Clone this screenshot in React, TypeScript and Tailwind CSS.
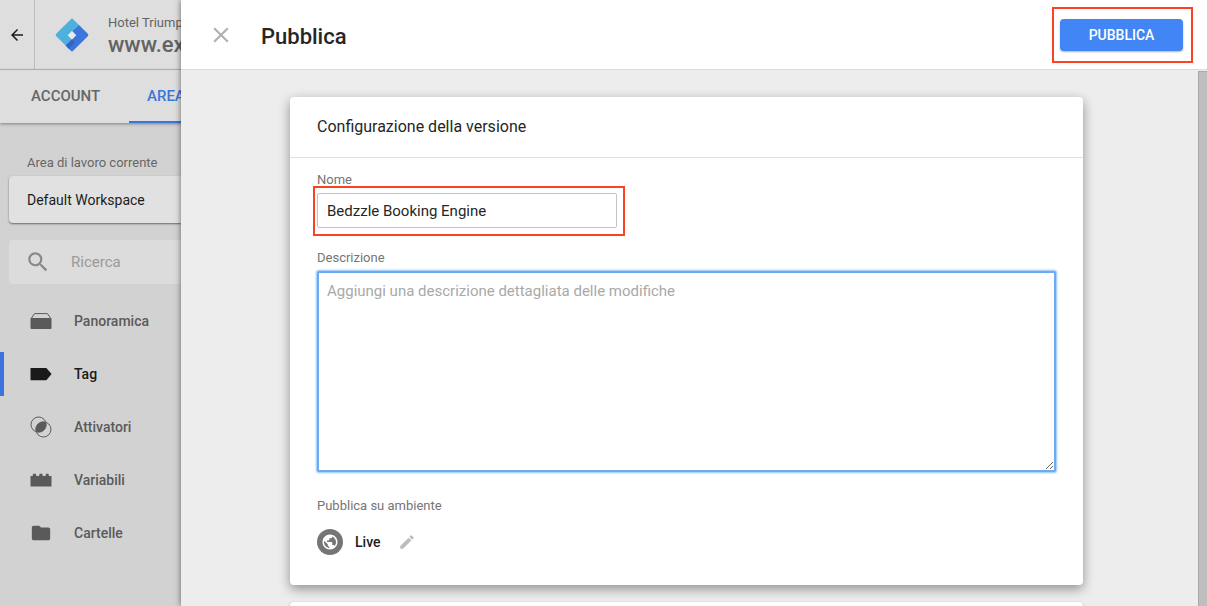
import { useState } from 'react';
import type { ReactNode } from 'react';
import { MdArrowBack, MdClose, MdEdit, MdFolder, MdPublic, MdSearch } from 'react-icons/md';

function Logo() {
  return (
    <svg className="h-[34px] w-[34px] shrink-0" viewBox="0 0 34 34" aria-hidden="true">
      <path d="M15.8 1.2 L1.2 15.8 a1.7 1.7 0 0 0 0 2.4 L10.6 27.6 L17 21.4 L13 17.2 L17 13.2 L24 7 L18.2 1.2 a1.7 1.7 0 0 0 -2.4 0Z" fill="#50b0dc" />
      <path d="M24 7 L32.8 15.8 a1.7 1.7 0 0 1 0 2.4 L18.2 32.8 a1.7 1.7 0 0 1 -2.4 0 L10.6 27.6 L17 21.2 L21 17.2 L17 13.2Z" fill="#3d76db" />
      <path d="M17 21.2 L20 24.2 L14 31 L10.6 27.6Z" fill="#3464c4" />
      <path d="M17 13 L21.2 17.2 L17 21.4 L12.8 17.2Z" fill="#e8eaec" />
    </svg>
  );
}

function OverviewIcon() {
  return (
    <svg className="h-[22px] w-[22px]" viewBox="0 0 22 22" aria-hidden="true">
      <path d="M1.4 8.2 L4.6 3.6 H17.4 L20.6 8.2" fill="none" stroke="currentColor" strokeWidth="1" />
      <path d="M1.5 8 H20.5 a1 1 0 0 1 1 1 V18 a1 1 0 0 1 -1 1 H1.5 a1 1 0 0 1 -1 -1 V9 a1 1 0 0 1 1 -1Z" fill="currentColor" />
    </svg>
  );
}

function TagIcon() {
  return (
    <svg className="h-[22px] w-[22px]" viewBox="0 0 22 22" aria-hidden="true">
      <path d="M0.5 5 H16 a1 1 0 0 1 0.8 0.4 L21.6 11 L16.8 16.8 a1 1 0 0 1 -0.8 0.4 H0.5Z" fill="currentColor" />
    </svg>
  );
}

function TriggerIcon() {
  return (
    <svg className="h-[22px] w-[22px]" viewBox="0 0 22 22" aria-hidden="true">
      <circle cx="8.6" cy="8.6" r="7.6" fill="none" stroke="currentColor" strokeWidth="1" />
      <circle cx="13.4" cy="13.4" r="7.6" fill="none" stroke="currentColor" strokeWidth="1" />
      <path d="M15.8 6.2 A7.6 7.6 0 0 0 6.2 15.8 A7.6 7.6 0 0 0 15.8 6.2Z" fill="currentColor" />
    </svg>
  );
}

function VariableIcon() {
  return (
    <svg className="h-[22px] w-[22px]" viewBox="0 0 22 22" aria-hidden="true">
      <path d="M0.5 7 H2.6 L3.2 4.8 H5.8 L6.4 7 H9 L9.6 4.8 H12.2 L12.8 7 H15.4 L16 4.8 H18.4 L19 7 H21.5 V17.4 H0.5Z" fill="currentColor" />
    </svg>
  );
}

const items: { label: string; icon: ReactNode }[] = [
  { label: 'Panoramica', icon: <OverviewIcon /> },
  { label: 'Tag', icon: <TagIcon /> },
  { label: 'Attivatori', icon: <TriggerIcon /> },
  { label: 'Variabili', icon: <VariableIcon /> },
  { label: 'Cartelle', icon: <MdFolder className="h-[22px] w-[22px]" /> },
];

function Sidebar() {
  const [active, setActive] = useState('Tag');

  return (
    <aside className="flex w-[181px] shrink-0 flex-col overflow-hidden whitespace-nowrap bg-[#d2d2d2]">
      <div className="flex h-[70px] shrink-0 items-stretch border-b border-[#b9b9b9] bg-[#dedede]">
        <button aria-label="Indietro" className="flex w-[35px] shrink-0 items-center justify-center border-r border-[#bcbcbc] text-[#1c1c1c]">
          <MdArrowBack className="h-[18px] w-[18px]" />
        </button>
        <div className="flex items-center gap-[19px] pl-5">
          <Logo />
          <div className="text-[#636363]">
            <p className="text-[13px] leading-5">Hotel Triump</p>
            <p className="text-[22px] font-medium leading-6">www.ex</p>
          </div>
        </div>
      </div>

      <nav className="z-10 flex h-[53px] shrink-0 bg-[#dedede] text-[15px] font-medium shadow-[0_1px_3px_rgba(0,0,0,0.4)]">
        <a href="#account" className="flex w-[129px] shrink-0 items-center pl-[31px] text-[#666]">ACCOUNT</a>
        <a href="#area" className="flex flex-1 items-center border-b-2 border-[#3b75dc] pl-[18px] pt-0.5 text-[#3b75dc]">AREA</a>
      </nav>

      <div className="pl-[9px] pt-[30px]">
        <p className="pl-[18px] text-[13px] leading-5 text-[#666]">Area di lavoro corrente</p>
        <button className="mt-[3px] flex h-[47px] w-full items-center rounded-l-sm bg-[#e1e1e1] pl-[18px] text-sm text-[#1c1c1c] shadow-[0_1px_2px_rgba(0,0,0,0.5)]">
          Default Workspace
        </button>
        <label className="mt-[17px] flex h-11 items-center gap-5 rounded-l-sm bg-[#dcdcdc] pl-4">
          <MdSearch className="h-[26px] w-[26px] shrink-0 text-[#888]" />
          <input
            type="text"
            aria-label="Ricerca"
            placeholder="Ricerca"
            className="w-full min-w-0 bg-transparent text-[15px] text-[#444] outline-none placeholder:text-[#999]"
          />
        </label>
      </div>

      <ul className="mt-[15px] flex flex-col gap-[9px]">
        {items.map(item => (
          <li key={item.label}>
            <button
              onClick={() => setActive(item.label)}
              className={`flex h-11 w-full items-center gap-[22px] border-l-4 pl-[26px] text-sm font-medium ${
                active === item.label ? 'border-[#3b75dc] text-[#1a1a1a]' : 'border-transparent text-[#5a5a5a]'
              }`}
            >
              {item.icon}
              {item.label}
            </button>
          </li>
        ))}
      </ul>
    </aside>
  );
}

function VersionCard() {
  const [name, setName] = useState('Bedzzle Booking Engine');
  const [description, setDescription] = useState('');

  return (
    <section className="shrink-0 rounded-sm bg-white shadow-[0_4px_12px_rgba(0,0,0,0.4)]">
      <h2 className="flex h-[61px] items-center border-b border-[#e0e0e0] px-[27px] text-base text-[#262626]">
        Configurazione della versione
      </h2>
      <div className="px-[27px] pb-[30px] pt-3 text-[#757575]">
        <label htmlFor="name" className="block text-[13px] leading-5">Nome</label>
        <div className="relative mt-[3px] w-[300px]">
          <input
            id="name"
            type="text"
            value={name}
            onChange={e => setName(e.target.value)}
            className="block h-[35px] w-full rounded-xs border border-[#c4c4c4] bg-white px-[9px] text-[15px] text-[#262626] outline-none"
          />
          <div className="pointer-events-none absolute -bottom-2 -left-1 -right-2 -top-[7px] border-2 border-[#fb4222]" />
        </div>

        <label htmlFor="description" className="mt-5 block text-[13px] leading-5">Descrizione</label>
        <textarea
          id="description"
          value={description}
          onChange={e => setDescription(e.target.value)}
          placeholder="Aggiungi una descrizione dettagliata delle modifiche"
          className="mt-[3px] block h-[201px] w-full resize rounded-xs border-2 border-[#6cabf2] bg-white px-2 py-2 text-[15px] leading-5 text-[#262626] shadow-[0_0_2px_1px_#8fc2fa] outline-none placeholder:text-[#a9a9a9]"
        />

        <p className="mt-6 text-[13px] leading-5">Pubblica su ambiente</p>
        <div className="mt-[13px] flex items-center">
          <span className="flex h-[26px] w-[26px] items-center justify-center rounded-full bg-[#757575] text-white">
            <MdPublic className="h-[18px] w-[18px]" />
          </span>
          <span className="ml-3 text-sm font-medium text-[#1c1c1c]">Live</span>
          <button aria-label="Modifica ambiente" className="ml-[18px] text-[#bdbdbd]">
            <MdEdit className="h-[18px] w-[18px]" />
          </button>
        </div>
      </div>
    </section>
  );
}

export default function App() {
  return (
    <div className="flex h-screen overflow-hidden font-[Roboto,sans-serif]">
      <Sidebar />
      <main className="z-20 flex min-w-0 flex-1 flex-col bg-[#ededed] shadow-[0_0_6px_rgba(0,0,0,0.55)]">
        <header className="flex h-[70px] shrink-0 items-center border-b border-[#dcdcdc] bg-white pl-[27px] pr-6">
          <button aria-label="Chiudi" className="text-[#b0b0b0]">
            <MdClose className="h-[26px] w-[26px]" />
          </button>
          <h1 className="ml-[27px] pt-1 text-[22px] font-medium text-[#262626]">Pubblica</h1>
          <div className="relative ml-auto">
            <button className="block h-8 w-[123px] rounded-sm bg-[#4285f4] text-sm font-medium text-white shadow-[0_1px_2px_rgba(0,0,0,0.3)]">
              PUBBLICA
            </button>
            <div className="pointer-events-none absolute -bottom-3 -left-2 -right-2.5 -top-3 border-2 border-[#fb4222]" />
          </div>
        </header>

        <div className="flex min-h-0 flex-1">
          <div className="flex min-w-0 flex-1 flex-col gap-[17px] overflow-hidden pl-[109px] pr-[115px] pt-[27px]">
            <VersionCard />
            <section className="h-40 shrink-0 rounded-sm bg-white shadow-[0_1px_3px_rgba(0,0,0,0.3)]" />
          </div>
          <div className="mt-px w-[9px] shrink-0 border-l border-t border-[#a9a9a9] bg-[#bfbfbf]" />
        </div>
      </main>
    </div>
  );
}
